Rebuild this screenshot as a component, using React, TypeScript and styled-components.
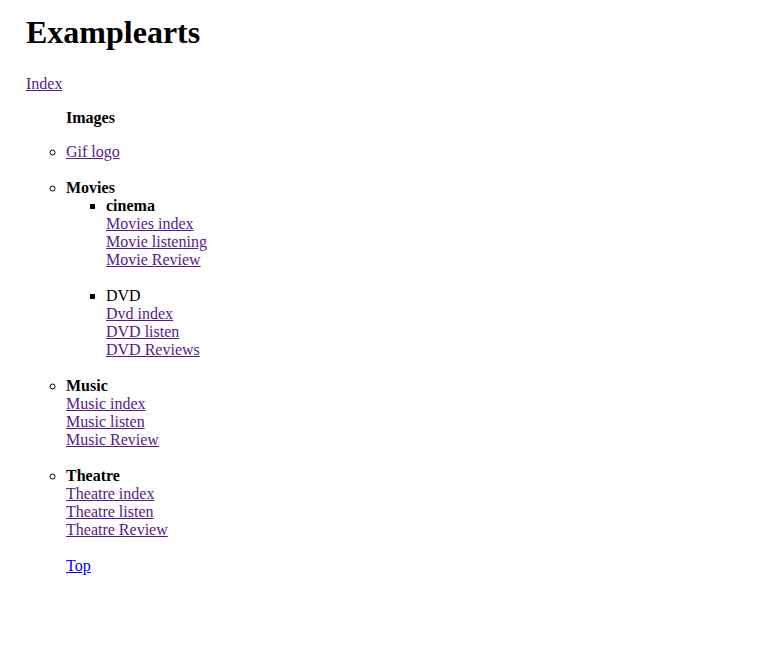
import React from "react";
import styled, { createGlobalStyle } from "styled-components";

const Global = createGlobalStyle`
  html, body { margin: 0; padding: 0; background: #ffffff; }
  body {
    font-family: "Liberation Serif", "Times New Roman", serif;
    font-size: 16px;
    line-height: 18px;
    color: #000000;
  }
`;

const Page = styled.div`
  padding: 14px 26px 40px 26px;
`;

const Title = styled.h1`
  font-size: 32px;
  line-height: 37px;
  font-weight: bold;
  margin: 0 0 24px 0;
`;

const Para = styled.p`
  margin: 0 0 16px 0;
`;

const Link = styled.a<{ $fresh?: boolean }>`
  color: ${(p) => (p.$fresh ? "#0000ee" : "#551a8b")};
  text-decoration: underline;
`;

const Indent = styled.div`
  padding-left: 40px;
`;

const Label = styled.div<{ $bold?: boolean }>`
  font-weight: ${(p) => (p.$bold ? "bold" : "normal")};
`;

const Heading = styled.p`
  font-weight: bold;
  margin: 0 0 16px 0;
`;

const List = styled.ul<{ $marker: string; $indent: number }>`
  list-style-type: ${(p) => p.$marker};
  margin: 0;
  padding-left: ${(p) => p.$indent}px;
`;

const Item = styled.li`
  margin-bottom: 18px;
`;

const LinkLine = styled.div``;

type Group = { title: string; bold: boolean; links: string[] };

const movies: Group[] = [
  { title: "cinema", bold: true, links: ["Movies index", "Movie listening", "Movie Review"] },
  { title: "DVD", bold: false, links: ["Dvd index", "DVD listen", "DVD Reviews"] },
];

const sections: Group[] = [
  { title: "Music", bold: true, links: ["Music index", "Music listen", "Music Review"] },
  { title: "Theatre", bold: true, links: ["Theatre index", "Theatre listen", "Theatre Review"] },
];

const GroupBody = ({ g }: { g: Group }) => (
  <>
    <Label $bold={g.bold}>{g.title}</Label>
    {g.links.map((l) => (
      <LinkLine key={l}>
        <Link href="#">{l}</Link>
      </LinkLine>
    ))}
  </>
);

export default function App() {
  return (
    <Page>
      <Global />
      <Title>Examplearts</Title>
      <Para>
        <Link href="#">Index</Link>
      </Para>
      <Indent>
        <Heading>Images</Heading>
        <List $marker="circle" $indent={0}>
          <Item>
            <Link href="#">Gif logo</Link>
          </Item>
          <Item>
            <Label $bold>Movies</Label>
            <List $marker="square" $indent={40}>
              {movies.map((g) => (
                <Item key={g.title}>
                  <GroupBody g={g} />
                </Item>
              ))}
            </List>
          </Item>
          {sections.map((g) => (
            <Item key={g.title}>
              <GroupBody g={g} />
            </Item>
          ))}
        </List>
        <LinkLine>
          <Link href="#" $fresh>
            Top
          </Link>
        </LinkLine>
      </Indent>
    </Page>
  );
}
